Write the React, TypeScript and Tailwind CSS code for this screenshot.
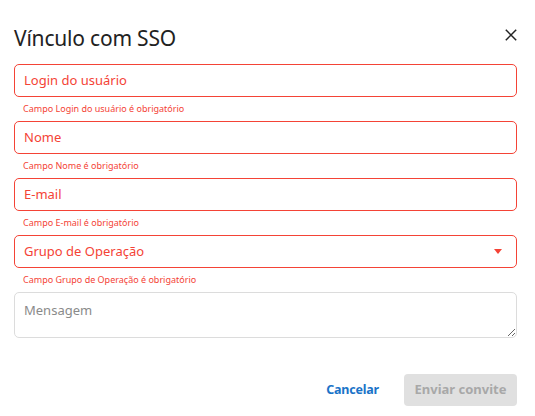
import React from "react";

const fields = ["Login do usuário", "Nome", "E-mail"];

function ErrorText({ label }: { label: string }) {
  return (
    <p className="h-[24px] pl-[9px] pt-[6px] text-[9px] leading-[12px] text-[#f44336]">
      Campo {label} é obrigatório
    </p>
  );
}

export default function App() {
  return (
    <div
      className="w-[535px] h-[416px] bg-white pl-[14px] pr-[18px] pt-[22px]"
      style={{ fontFamily: "'Noto Sans', 'Open Sans', sans-serif" }}
    >
      <div className="flex items-center justify-between h-[32px] mb-[10px]">
        <h1 className="text-[21px] leading-[32px] text-[#222] tracking-[-0.2px]">Vínculo com SSO</h1>
        <button className="w-[12px] h-[12px] -mt-[6px] flex items-center justify-center text-[#222]">
          <svg width="12" height="12" viewBox="0 0 12 12" stroke="currentColor" strokeWidth="1.5" fill="none">
            <path d="M0.8 0.8 L11.2 11.2 M11.2 0.8 L0.8 11.2" />
          </svg>
        </button>
      </div>

      {fields.map((f) => (
        <div key={f}>
          <div className="h-[33px] border border-[#f44336] rounded-[5px] flex items-center px-[9px]">
            <span className="text-[13px] text-[#f44336]">{f}</span>
          </div>
          <ErrorText label={f} />
        </div>
      ))}

      <div>
        <div className="h-[33px] border border-[#f44336] rounded-[5px] flex items-center justify-between pl-[9px] pr-[14px]">
          <span className="text-[13px] text-[#f44336]">Grupo de Operação</span>
          <svg width="8" height="5" viewBox="0 0 8 5">
            <path d="M0 0 L8 0 L4 5 Z" fill="#f44336" />
          </svg>
        </div>
        <ErrorText label="Grupo de Operação" />
      </div>

      <textarea
        placeholder="Mensagem"
        className="block w-full h-[46px] border border-[#dcdcdc] rounded-[5px] px-[9px] pt-[8px] text-[13px] text-[#333] placeholder:text-[#8a8a8a] outline-none resize-y"
      />

      <div className="flex justify-end items-center gap-[25px] mt-[36px]">
        <button className="text-[12.5px] font-bold text-[#1a73c8] tracking-[-0.2px]">Cancelar</button>
        <button className="w-[113px] h-[32px] rounded-[4px] bg-[#e0e0e0] text-[13px] font-bold text-[#a8a8a8]">
          Enviar convite
        </button>
      </div>
    </div>
  );
}
